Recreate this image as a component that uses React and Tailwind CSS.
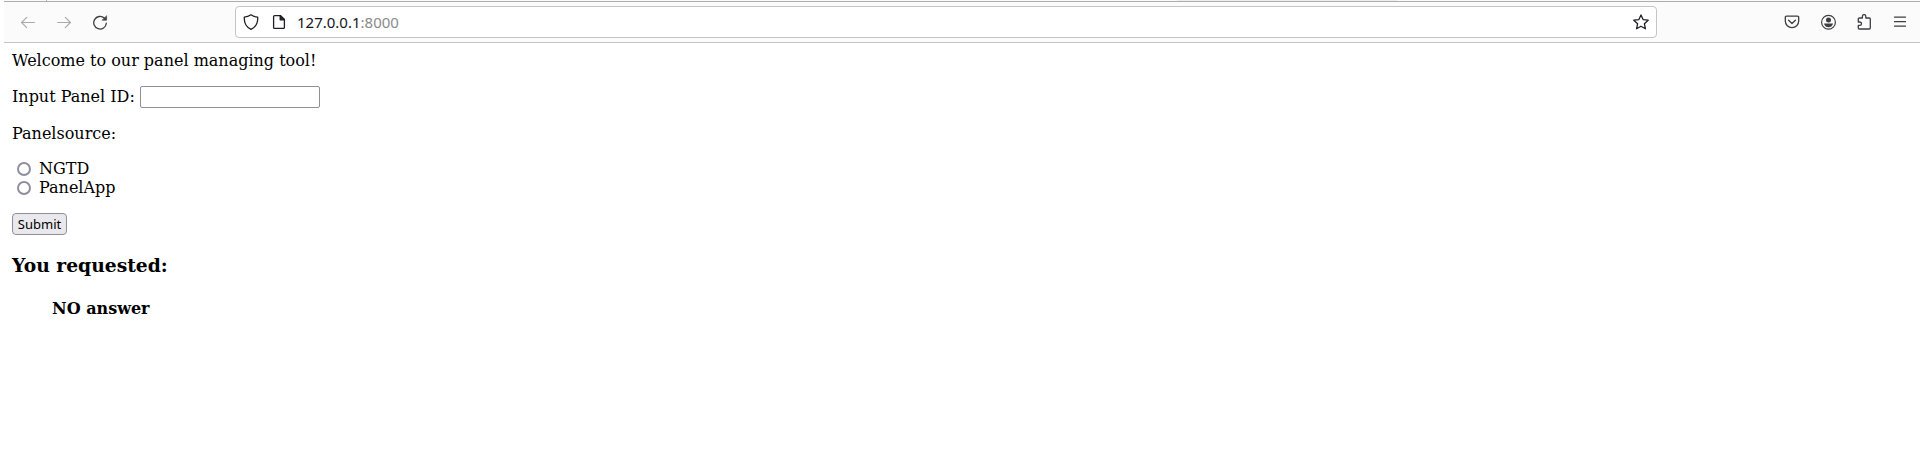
const ICON = "shrink-0 fill-none stroke-current";

function Toolbar() {
  return (
    <header className="ml-1 flex h-[41px] items-center border-b border-[#c4c4c4] bg-[#fbfbfb] pl-4 text-[#3e3e42]">
      <svg className={`${ICON} text-[#aaaaac]`} width="16" height="16" viewBox="0 0 16 16" strokeWidth="1.2" strokeLinecap="round" strokeLinejoin="round">
        <path d="M14.4 8.500H1.700M6.700 3.400 1.600 8.500l5.100 5.100" />
      </svg>
      <svg className={`${ICON} ml-5 text-[#aaaaac]`} width="16" height="16" viewBox="0 0 16 16" strokeWidth="1.2" strokeLinecap="round" strokeLinejoin="round">
        <path d="M1.600 8.500h12.700M9.300 3.400l5.100 5.100-5.100 5.100" />
      </svg>
      <svg className={`${ICON} ml-5`} width="16" height="16" viewBox="0 0 16 16" strokeWidth="1.3" strokeLinecap="round">
        <path d="M14.300 9.200A6.300 6.300 0 1 1 12.300 4.100" />
        <path d="M14.600 2v4.200h-4.200z" className="fill-current" strokeWidth="0.6" strokeLinejoin="round" />
      </svg>
      <div className="ml-[127px] flex h-8 w-[1422px] items-center rounded-[4px] border border-[#c4c4c4] bg-white pl-[7px] pr-[7px] text-[#202024]">
        <svg className={ICON} width="16" height="16" viewBox="0 0 16 16" strokeWidth="1.3" strokeLinejoin="round">
          <path d="M8 .8C6.300 2 4 3 1.300 3.100c-.3 5.400 2 10.100 6.700 12.200 4.700-2.100 7-6.800 6.700-12.200C12 3 9.700 2 8 .8z" />
        </svg>
        <svg className={`${ICON} ml-3`} width="16" height="16" viewBox="0 0 16 16" strokeWidth="1.3" strokeLinejoin="round">
          <path d="M9.600 1.600H3.600a1 1 0 0 0-1 1v10.800a1 1 0 0 0 1 1h8.800a1 1 0 0 0 1-1V5.400z" />
          <path d="M9.200 1.600v4.200h4.200z" className="fill-current" />
        </svg>
        <span className="ml-[10px] font-['Noto_Sans',sans-serif] text-[15px] leading-5 text-[#15141a]">
          127.0.0.1<span className="text-[#8a8a8d]">:8000</span>
        </span>
        <svg className={`${ICON} ml-auto`} width="16" height="16" viewBox="0 0 16 16" strokeWidth="1.3" strokeLinejoin="round">
          <path d="m8 .9 2.100 4.700 5.100.6-3.800 3.500 1 5.100L8 12.300l-4.400 2.500 1-5.100L.8 6.200l5.100-.6z" />
        </svg>
      </div>
      <svg className={`${ICON} ml-[127px]`} width="16" height="16" viewBox="0 0 16 16" strokeWidth="1.3" strokeLinecap="round" strokeLinejoin="round">
        <path d="M2.500 2.200h11a1.200 1.200 0 0 1 1.200 1.200v3.600a6.700 6.700 0 0 1-13.400 0V3.400A1.200 1.200 0 0 1 2.500 2.200z" />
        <path d="M4.600 6.200 8 9.500 11.400 6.200" />
      </svg>
      <svg className={`${ICON} ml-5`} width="17" height="16" viewBox="0 0 17 16" strokeWidth="1.2">
        <circle cx="8.500" cy="8.300" r="6.900" />
        <circle cx="8.500" cy="6" r="2.500" className="fill-current stroke-none" />
        <path d="M4 9.500h9a4.600 4.600 0 0 1-9 0z" className="fill-current stroke-none" />
      </svg>
      <svg className={`${ICON} ml-[19px]`} width="16" height="16" viewBox="0 0 16 16" strokeWidth="1.300" strokeLinejoin="round">
        <path d="M2.300 8V5a1 1 0 0 1 1-1h3.100V2.300a1.700 1.700 0 0 1 3.400 0V4H13.300a1 1 0 0 1 1 1v9a1 1 0 0 1-1 1H3.300a1 1 0 0 1-1-1v-2.600h1.500a1.700 1.700 0 0 0 0-3.400z" />
      </svg>
      <svg className={`${ICON} ml-5`} width="16" height="16" viewBox="0 0 16 16" strokeWidth="1.200" strokeLinecap="round">
        <path d="M2.500 3.200h11M2.500 7.700h11M2.500 12.200h11" />
      </svg>
    </header>
  );
}

function SourceOption({ label }) {
  return (
    <label className="flex h-[19px] items-center">
      <input
        type="radio"
        name="source"
        className="ml-[5px] mr-2 mt-px size-[14px] shrink-0 appearance-none rounded-full border-2 border-[#8f8f9d] bg-white"
      />
      {label}
    </label>
  );
}

export default function App() {
  return (
    <div className="min-h-[463px] bg-white">
      <div className="flex h-px bg-[#fbfbfb]">
        <div className="ml-[46px] w-px bg-[#b5b5b5]" />
        <div className="ml-[1130px] w-[220px] bg-[#ededeb]" />
      </div>
      <div className="ml-1 h-px bg-[#adadad]" />
      <Toolbar />
      <main className="pl-3 pt-2 font-['DejaVu_Serif',serif] text-base leading-[19px] text-black">
        <p>Welcome to our panel managing tool!</p>
        <form className="flex flex-col items-start">
          <label className="mt-4 flex h-[22px] items-start">
            <span className="pt-px">Input Panel ID:</span>
            <input type="text" className="ml-[5px] h-[22px] w-[180px] rounded-[2px] border border-[#8f8f9d] bg-white px-1" />
          </label>
          <p className="mt-4">Panelsource:</p>
          <div className="mt-4">
            <SourceOption label="NGTD" />
            <SourceOption label="PanelApp" />
          </div>
          <button
            type="button"
            className="mt-4 h-[22px] w-[55px] rounded-[4px] border border-[#8f8f9d] bg-[#e9e9ed] text-center font-['Noto_Sans',sans-serif] text-[13px] leading-5"
          >
            Submit
          </button>
        </form>
        <h3 className="mt-[19px] text-[18.72px] font-bold leading-[22px]">You requested:</h3>
        <p className="ml-10 mt-[23px] font-bold">NO answer</p>
      </main>
    </div>
  );
}
